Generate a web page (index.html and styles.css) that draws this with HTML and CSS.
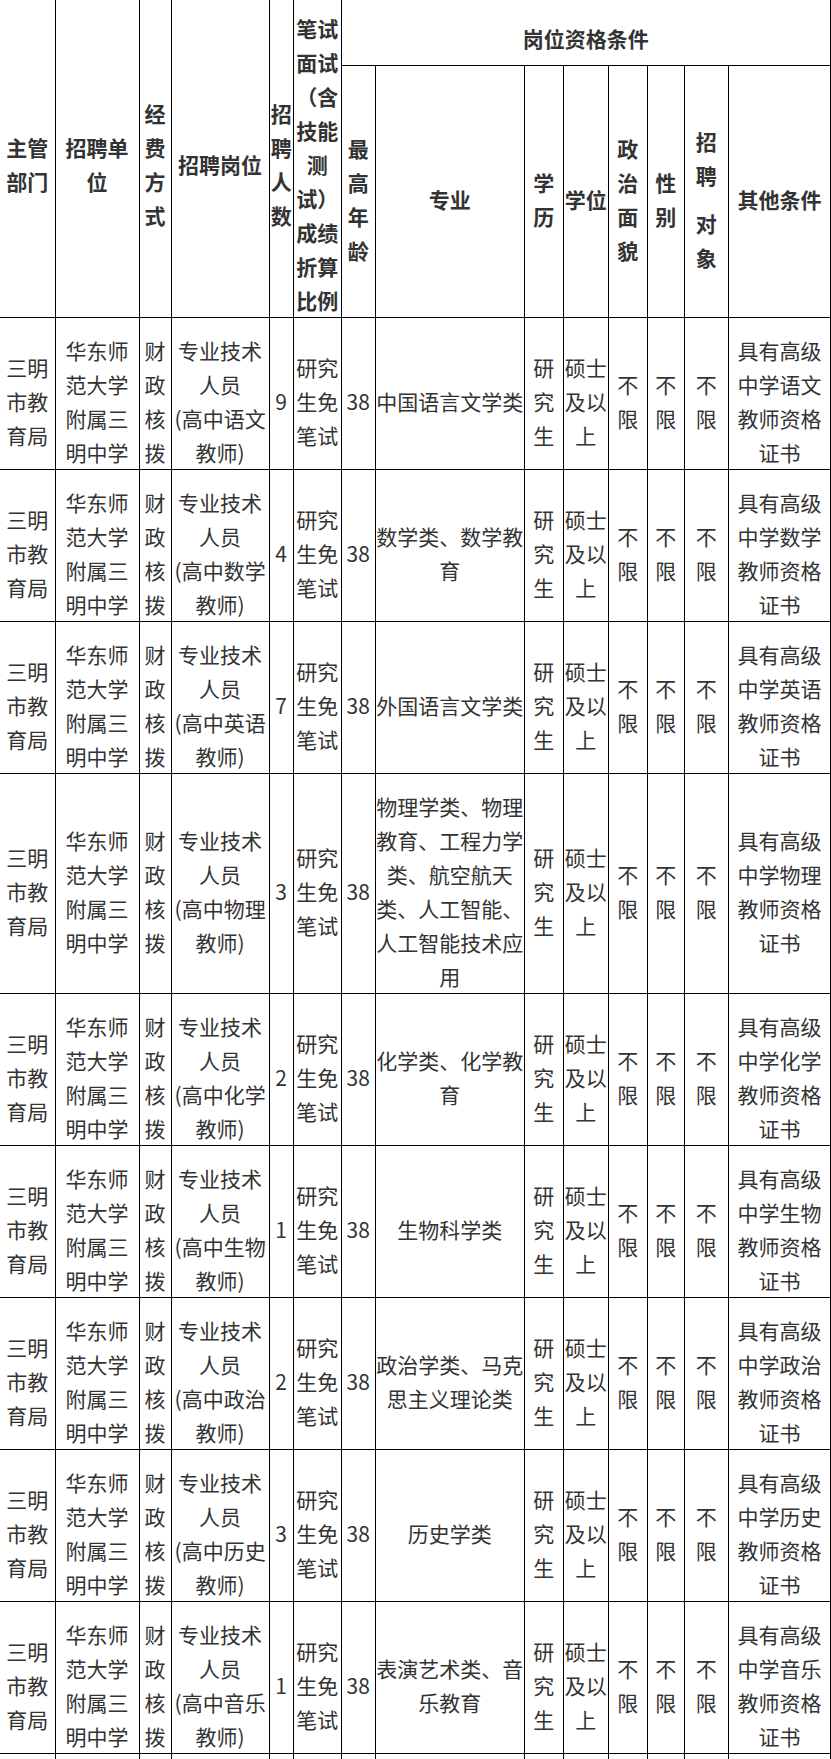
FILE: index.html
```html
<!DOCTYPE html>
<html lang="zh-CN">
<head>
<meta charset="utf-8">
<title>岗位资格条件</title>
<link rel="stylesheet" href="styles.css">
</head>
<body>
<table class="jobs">
  <colgroup>
    <col class="c1"><col class="c2"><col class="c3"><col class="c4"><col class="c5"><col class="c6"><col class="c7">
    <col class="c8"><col class="c9"><col class="c10"><col class="c11"><col class="c12"><col class="c13"><col class="c14">
  </colgroup>
  <thead>
    <tr class="h1">
      <th rowspan="2">主管部门</th>
      <th rowspan="2">招聘单位</th>
      <th rowspan="2">经费方式</th>
      <th rowspan="2">招聘岗位</th>
      <th rowspan="2">招聘人数</th>
      <th rowspan="2">笔试面试（含技能测试）成绩折算比例</th>
      <th colspan="8" class="group">岗位资格条件</th>
    </tr>
    <tr class="h2">
      <th>最高年龄</th>
      <th>专业</th>
      <th>学历</th>
      <th>学位</th>
      <th>政治面貌</th>
      <th>性别</th>
      <th class="target"><span class="blk">招聘</span><span class="blk gap">对象</span></th>
      <th>其他条件</th>
    </tr>
  </thead>
  <tbody>
    <tr>
      <td>三明市教育局</td><td>华东师范大学附属三明中学</td><td>财政核拨</td><td>专业技术人员<br>(高中语文教师)</td><td>9</td><td>研究生免笔试</td><td>38</td><td>中国语言文学类</td><td>研究生</td><td>硕士及以上</td><td>不限</td><td>不限</td><td class="target">不限</td><td>具有高级中学语文教师资格证书</td>
    </tr>
    <tr>
      <td>三明市教育局</td><td>华东师范大学附属三明中学</td><td>财政核拨</td><td>专业技术人员<br>(高中数学教师)</td><td>4</td><td>研究生免笔试</td><td>38</td><td>数学类、数学教育</td><td>研究生</td><td>硕士及以上</td><td>不限</td><td>不限</td><td class="target">不限</td><td>具有高级中学数学教师资格证书</td>
    </tr>
    <tr>
      <td>三明市教育局</td><td>华东师范大学附属三明中学</td><td>财政核拨</td><td>专业技术人员<br>(高中英语教师)</td><td>7</td><td>研究生免笔试</td><td>38</td><td>外国语言文学类</td><td>研究生</td><td>硕士及以上</td><td>不限</td><td>不限</td><td class="target">不限</td><td>具有高级中学英语教师资格证书</td>
    </tr>
    <tr>
      <td>三明市教育局</td><td>华东师范大学附属三明中学</td><td>财政核拨</td><td>专业技术人员<br>(高中物理教师)</td><td>3</td><td>研究生免笔试</td><td>38</td><td>物理学类、物理教育、工程力学类、航空航天类、人工智能、人工智能技术应用</td><td>研究生</td><td>硕士及以上</td><td>不限</td><td>不限</td><td class="target">不限</td><td>具有高级中学物理教师资格证书</td>
    </tr>
    <tr>
      <td>三明市教育局</td><td>华东师范大学附属三明中学</td><td>财政核拨</td><td>专业技术人员<br>(高中化学教师)</td><td>2</td><td>研究生免笔试</td><td>38</td><td>化学类、化学教育</td><td>研究生</td><td>硕士及以上</td><td>不限</td><td>不限</td><td class="target">不限</td><td>具有高级中学化学教师资格证书</td>
    </tr>
    <tr>
      <td>三明市教育局</td><td>华东师范大学附属三明中学</td><td>财政核拨</td><td>专业技术人员<br>(高中生物教师)</td><td>1</td><td>研究生免笔试</td><td>38</td><td>生物科学类</td><td>研究生</td><td>硕士及以上</td><td>不限</td><td>不限</td><td class="target">不限</td><td>具有高级中学生物教师资格证书</td>
    </tr>
    <tr>
      <td>三明市教育局</td><td>华东师范大学附属三明中学</td><td>财政核拨</td><td>专业技术人员<br>(高中政治教师)</td><td>2</td><td>研究生免笔试</td><td>38</td><td>政治学类、马克思主义理论类</td><td>研究生</td><td>硕士及以上</td><td>不限</td><td>不限</td><td class="target">不限</td><td>具有高级中学政治教师资格证书</td>
    </tr>
    <tr>
      <td>三明市教育局</td><td>华东师范大学附属三明中学</td><td>财政核拨</td><td>专业技术人员<br>(高中历史教师)</td><td>3</td><td>研究生免笔试</td><td>38</td><td>历史学类</td><td>研究生</td><td>硕士及以上</td><td>不限</td><td>不限</td><td class="target">不限</td><td>具有高级中学历史教师资格证书</td>
    </tr>
    <tr>
      <td>三明市教育局</td><td>华东师范大学附属三明中学</td><td>财政核拨</td><td>专业技术人员<br>(高中音乐教师)</td><td>1</td><td>研究生免笔试</td><td>38</td><td>表演艺术类、音乐教育</td><td>研究生</td><td>硕士及以上</td><td>不限</td><td>不限</td><td class="target">不限</td><td>具有高级中学音乐教师资格证书</td>
    </tr>
    <tr class="cont">
      <td></td><td></td><td></td><td></td><td></td><td></td><td></td><td></td><td></td><td></td><td></td><td></td><td></td><td></td>
    </tr>
  </tbody>
</table>
</body>
</html>
```
FILE: styles.css
```css
html, body {
  margin: 0;
  padding: 0;
  background: #fff;
}

.jobs {
  border-collapse: collapse;
  table-layout: fixed;
  width: 831px;
  font-family: "Noto Sans CJK SC", "Noto Sans", sans-serif;
  font-size: 21px;
  line-height: 34px;
  color: #333;
}

.jobs th,
.jobs td {
  border: 1px solid #000;
  padding: 15px 0 0;
  text-align: center;
  vertical-align: middle;
}

.jobs th {
  font-weight: 700;
}

.jobs tr > :first-child {
  border-left: none;
}

.jobs .h1 th {
  border-top: none;
  padding-top: 11px;
}

.jobs .h1 .group {
  height: 54px;
}

.jobs .target {
  padding-left: 2px;
  padding-right: 2px;
}

.blk {
  display: block;
}

.gap {
  margin-top: 14px;
}

.cont td {
  height: 60px;
}

.c1 { width: 55px; }
.c2 { width: 84px; }
.c3 { width: 32px; }
.c4 { width: 98px; }
.c5 { width: 24px; }
.c6 { width: 48px; }
.c7 { width: 34px; }
.c8 { width: 149px; }
.c9 { width: 39px; }
.c10 { width: 45px; }
.c11 { width: 39px; }
.c12 { width: 37px; }
.c13 { width: 44px; }
.c14 { width: 102px; }
```
